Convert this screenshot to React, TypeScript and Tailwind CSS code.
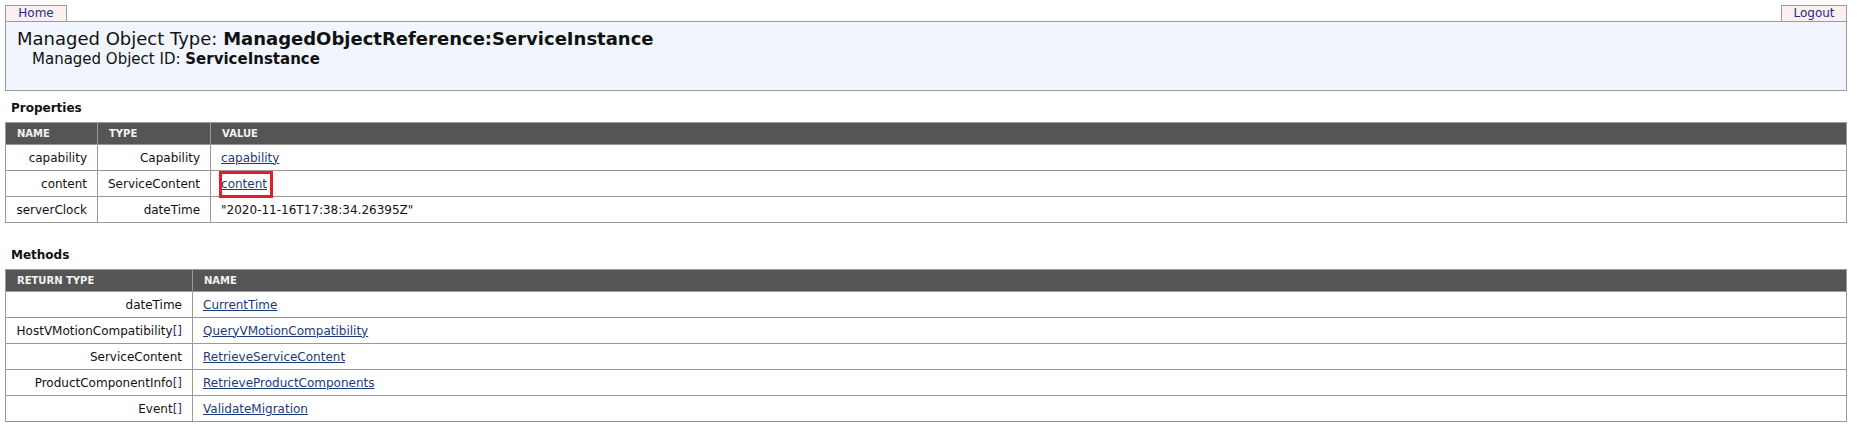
const font = "font-['DejaVu_Sans','Verdana',sans-serif]";

const properties = [
  { name: "capability", type: "Capability", value: "capability", link: true },
  { name: "content", type: "ServiceContent", value: "content", link: true, marked: true },
  { name: "serverClock", type: "dateTime", value: '"2020-11-16T17:38:34.26395Z"' },
];

const methods = [
  { ret: "dateTime", name: "CurrentTime" },
  { ret: "HostVMotionCompatibility", arr: true, name: "QueryVMotionCompatibility" },
  { ret: "ServiceContent", name: "RetrieveServiceContent" },
  { ret: "ProductComponentInfo", arr: true, name: "RetrieveProductComponents" },
  { ret: "Event", arr: true, name: "ValidateMigration" },
];

const th = "h-[22px] border border-[#999] bg-[#555] px-[11px] text-left text-[10px] font-bold text-[#f2f2f2] align-middle";
const td = "h-[26px] border border-[#999] px-[10px] text-[12px] text-[#111] align-middle";
const link = "text-[#1b3a7c] underline";

export default function App() {
  return (
    <div className={`${font} min-h-[433px] bg-white pt-[5px] pl-[5px] pr-[10px]`}>
      <div className="flex h-[16px] justify-between">
        <span className="w-[62px] border border-b-0 border-[#999] bg-[#fbefef] text-center text-[12px] leading-[15px] text-[#1f2d85]">
          Home
        </span>
        <span className="w-[66px] border border-b-0 border-[#999] bg-[#fbefef] text-center text-[12px] leading-[15px] text-[#1f2d85]">
          Logout
        </span>
      </div>
      <div className="h-[70px] border border-[#999] bg-[#f1f6fe] pl-[11px] pt-[6px] text-[#111]">
        <div className="text-[18px] leading-[22px]">
          Managed Object Type: <b>ManagedObjectReference:ServiceInstance</b>
        </div>
        <div className="ml-[15px] text-[15px] leading-[18px]">
          Managed Object ID: <b>ServiceInstance</b>
        </div>
      </div>

      <h2 className="mt-[10px] mb-[6px] pl-[6px] text-[12px] font-bold leading-[15px] text-[#111]">Properties</h2>
      <table className="w-full border-collapse">
        <thead>
          <tr>
            <th className={`${th} w-[92px]`}>NAME</th>
            <th className={`${th} w-[113px]`}>TYPE</th>
            <th className={th}>VALUE</th>
          </tr>
        </thead>
        <tbody>
          {properties.map((p) => (
            <tr key={p.name}>
              <td className={`${td} text-right`}>{p.name}</td>
              <td className={`${td} text-right`}>{p.type}</td>
              <td className={td}>
                {p.link ? (
                  <span className="relative inline-block">
                    <a href="#" className={link}>
                      {p.value}
                    </a>
                    {p.marked && (
                      <span className="pointer-events-none absolute -left-[2px] -right-[6px] -top-[4px] -bottom-[5px] border-[3px] border-[#e8192c]" />
                    )}
                  </span>
                ) : (
                  p.value
                )}
              </td>
            </tr>
          ))}
        </tbody>
      </table>

      <h2 className="mt-[25px] mb-[6px] pl-[6px] text-[12px] font-bold leading-[15px] text-[#111]">Methods</h2>
      <table className="w-full border-collapse">
        <thead>
          <tr>
            <th className={`${th} w-[187px]`}>RETURN TYPE</th>
            <th className={th}>NAME</th>
          </tr>
        </thead>
        <tbody>
          {methods.map((m) => (
            <tr key={m.name}>
              <td className={`${td} text-right`}>
                {m.ret}
                {m.arr && <span className="text-[#4a1d7c]">[]</span>}
              </td>
              <td className={td}>
                <a href="#" className={link}>
                  {m.name}
                </a>
              </td>
            </tr>
          ))}
        </tbody>
      </table>
    </div>
  );
}
